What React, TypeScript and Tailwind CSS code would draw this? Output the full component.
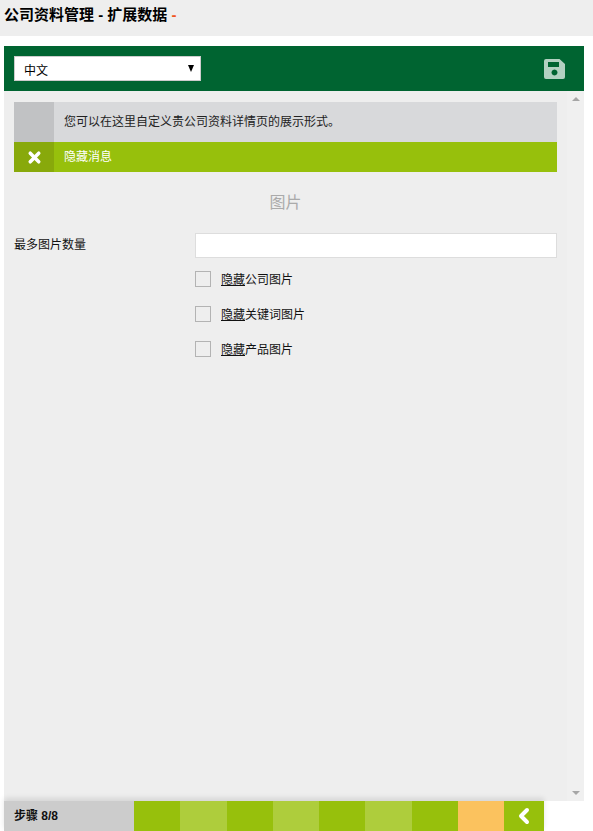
import { X, ChevronLeft } from "lucide-react";

const font = "[font-family:'Liberation_Sans','Noto_Sans_CJK_SC',sans-serif]";

function Check({ label }: { label: string }) {
  return (
    <div className="flex h-[35px] items-center">
      <span className="box-border h-4 w-4 border border-[#b3b3b3] bg-[#eeeeee]" />
      <span className="ml-[10px] translate-y-px text-xs leading-4 text-[#111]">
        <a className="underline">隐藏</a>
        {label}
      </span>
    </div>
  );
}

const steps = [
  "w-[46px] bg-[#97c00c]",
  "w-[47px] bg-[#aecd3c]",
  "w-[46px] bg-[#97c00c]",
  "w-[46px] bg-[#aecd3c]",
  "w-[46px] bg-[#97c00c]",
  "w-[47px] bg-[#aecd3c]",
  "w-[46px] bg-[#97c00c]",
  "w-[46px] bg-[#fbc25e]",
];

export default function App() {
  return (
    <div className={`${font} flex h-[831px] w-[593px] flex-col overflow-hidden bg-white text-black`}>
      <div className="flex h-9 shrink-0 items-start bg-[#eeeeee] pl-1 pt-[6px]">
        <h1 className="text-[15px] font-bold leading-[18px]">
          公司资料管理 - 扩展数据 <span className="text-[#f0541e]">-</span>
        </h1>
      </div>

      <div className="ml-1 mt-[10px] flex w-[580px] shrink-0 flex-col">
        <div className="flex h-[45px] items-center justify-between bg-[#006431] pl-[10px] pr-[19px]">
          <div className="relative box-border flex h-[25px] w-[187px] items-center border border-[#cccccc] bg-white pl-[9px] pt-[5px] text-xs">
            中文
            <span className="absolute right-[6px] top-[8px] h-0 w-0 border-x-[3.5px] border-t-[7px] border-x-transparent border-t-black" />
          </div>
          <svg width="21" height="20" viewBox="0 0 21 20" className="mt-[1px]">
            <path
              fillRule="evenodd"
              fill="#b2d1c1"
              d="M2 0H15.5L21 5V18a2 2 0 0 1-2 2H2a2 2 0 0 1-2-2V2a2 2 0 0 1 2-2ZM4 3V8H15V3ZM10.5 10.5a3 3 0 1 0 .01 0Z"
            />
          </svg>
        </div>

        <div className="flex h-[710px] bg-[#eeeeee]">
          <main className="w-[563px] px-[10px] pt-[11px]">
            <div className="w-[543px]">
              <div className="flex h-10 bg-[#d8d9db]">
                <div className="w-10 bg-[#c1c2c4]" />
                <p className="pl-[10px] pt-[11px] text-xs leading-[18px] text-[#222]">
                  您可以在这里自定义贵公司资料详情页的展示形式。
                </p>
              </div>
              <div className="flex h-[30px] bg-[#97c00c]">
                <div className="flex w-10 items-center justify-center bg-[#88a90b]">
                  <X size={17} strokeWidth={5} className="text-white" />
                </div>
                <a className="pl-[10px] pt-[6px] text-xs leading-[18px] text-white">隐藏消息</a>
              </div>
            </div>

            <h2 className="mt-[19px] w-[543px] text-center text-base leading-6 text-[#aaaaaa]">图片</h2>

            <div className="mt-[18px] flex w-[543px]">
              <label className="w-[181px] pt-[3px] text-xs leading-[18px] text-[#111]">最多图片数量</label>
              <div className="flex-1">
                <div className="box-border h-[25px] border border-[#dddddd] bg-white" />
                <div className="mt-[3px]">
                  <Check label="公司图片" />
                  <Check label="关键词图片" />
                  <Check label="产品图片" />
                </div>
              </div>
            </div>
          </main>
          <div className="relative w-[17px] bg-[#f0f0f0]">
            <span className="absolute left-[5px] top-[6px] h-0 w-0 border-x-[4px] border-b-[4px] border-x-transparent border-b-[#a6a6a6]" />
            <span className="absolute bottom-[6px] left-[5px] h-0 w-0 border-x-[4px] border-t-[4px] border-x-transparent border-t-[#a6a6a6]" />
          </div>
        </div>
      </div>

      <div className="ml-1 flex h-[30px] w-[540px] shrink-0 shadow-[0_-3px_5px_rgba(0,0,0,0.1)]">
        <div className="flex w-[130px] items-center bg-[#cccccc] pl-[10px] text-xs font-bold text-[#111]">步骤 8/8</div>
        {steps.map((s, i) => (
          <div key={i} className={s} />
        ))}
        <div className="flex w-10 items-center justify-center bg-[#97c00c]">
          <ChevronLeft size={24} strokeWidth={4} className="text-white" />
        </div>
      </div>
    </div>
  );
}
